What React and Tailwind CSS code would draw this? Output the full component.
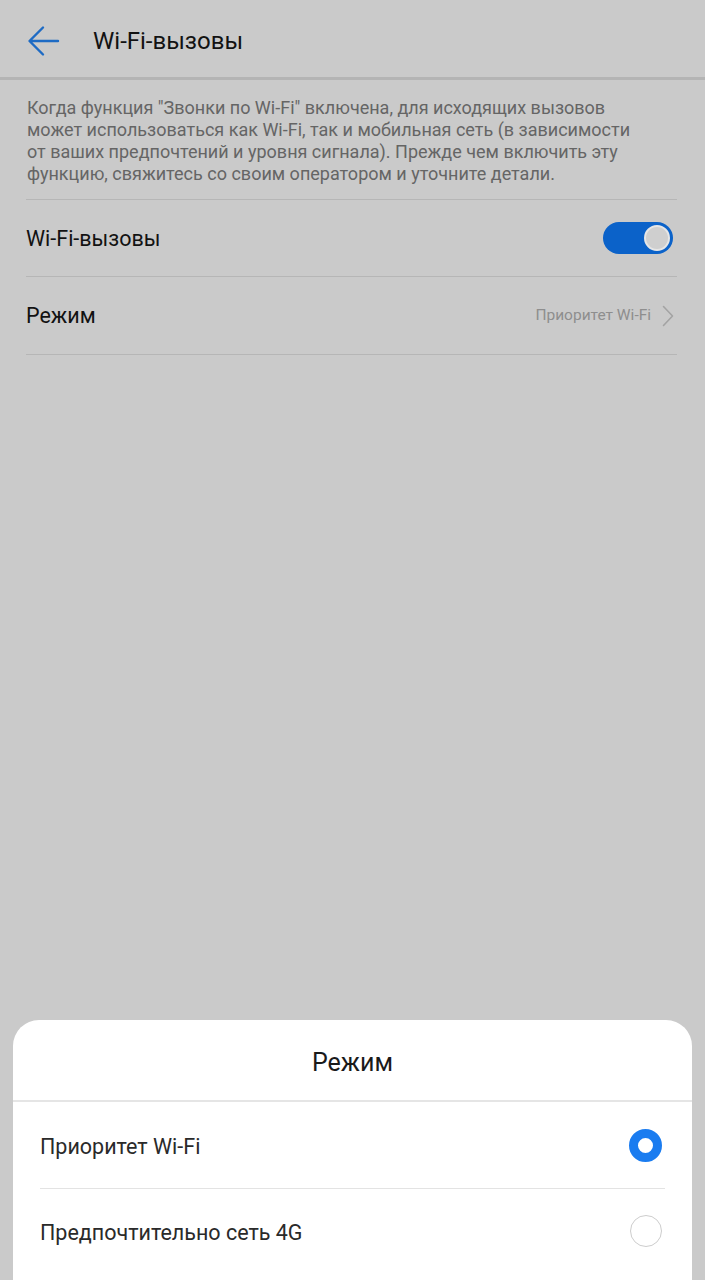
import React from 'react'

const font = { fontFamily: 'Roboto, "Noto Sans", sans-serif' }

const BackArrow = () => (
  <svg width="34" height="34" viewBox="0 0 34 34" fill="none">
    <path d="M31 17H3M16 3.5L2.5 17L16 30.5" stroke="#1e6bc4" strokeWidth="2.4" strokeLinecap="round" strokeLinejoin="round" />
  </svg>
)

const Chevron = () => (
  <svg width="12" height="22" viewBox="0 0 12 22" fill="none">
    <path d="M1.5 1.5L10.5 11L1.5 20.5" stroke="#a3a3a3" strokeWidth="1.6" strokeLinecap="round" strokeLinejoin="round" />
  </svg>
)

const Toggle = () => (
  <div className="flex h-[32px] w-[70px] items-center justify-end rounded-full bg-[#0b62c9] pr-[3px]">
    <div className="h-[26px] w-[26px] rounded-full border-2 border-[#e6e6e6] bg-[#cfcfcf]" />
  </div>
)

const Radio = ({ checked }) =>
  checked ? (
    <div className="h-[33px] w-[33px] rounded-full border-[9px] border-[#1a7cf0] bg-white" />
  ) : (
    <div className="h-[32px] w-[32px] rounded-full border-[1.5px] border-[#cdcdcd] bg-white" />
  )

export default function App() {
  return (
    <div style={font} className="flex h-[1280px] w-[705px] flex-col overflow-hidden bg-[#cacaca]">
      <div className="flex h-[80px] items-center border-b-[3px] border-[#b4b4b4] pl-[27px] pt-[5px]">
        <BackArrow />
        <span className="ml-[32px] text-[24px] text-[#121212]">Wi-Fi-вызовы</span>
      </div>

      <p className="whitespace-nowrap pb-[14px] pl-[27px] pt-[17px] text-[18px] leading-[22px] text-[#656565]">
        Когда функция "Звонки по Wi-Fi" включена, для исходящих вызовов
        <br />
        может использоваться как Wi-Fi, так и мобильная сеть (в зависимости
        <br />
        от ваших предпочтений и уровня сигнала). Прежде чем включить эту
        <br />
        функцию, свяжитесь со своим оператором и уточните детали.
      </p>

      <div className="ml-[26px] mr-[28px] border-t border-[#b6b6b6]">
        <div className="flex h-[77px] items-center justify-between border-b border-[#b6b6b6] pr-[4px]">
          <span className="pt-[2px] text-[21.5px] text-[#121212]">Wi-Fi-вызовы</span>
          <Toggle />
        </div>
        <div className="flex h-[78px] items-center justify-between border-b border-[#b6b6b6] pr-[3px]">
          <span className="pt-[2px] text-[21.5px] text-[#121212]">Режим</span>
          <div className="flex items-center gap-[11px]">
            <span className="text-[15.5px] text-[#8e8e8e]">Приоритет Wi-Fi</span>
            <Chevron />
          </div>
        </div>
      </div>

      <div className="mx-[13px] mt-auto h-[260px] shrink-0 rounded-t-[26px] bg-white">
        <div className="flex h-[82px] items-center justify-center border-b-2 border-[#e5e5e5] pt-[6px]">
          <span className="text-[25px] text-[#1a1a1a]">Режим</span>
        </div>
        <div className="px-[27px]">
          <div className="flex h-[87px] items-center justify-between border-b border-[#e3e3e3] pr-[3px]">
            <span className="pt-[5px] text-[21.5px] text-[#2a2a2a]">Приоритет Wi-Fi</span>
            <Radio checked />
          </div>
          <div className="flex h-[84px] items-center justify-between pr-[3px]">
            <span className="pt-[4px] text-[21.5px] text-[#2a2a2a]">Предпочтительно сеть 4G</span>
            <Radio />
          </div>
        </div>
      </div>
    </div>
  )
}
